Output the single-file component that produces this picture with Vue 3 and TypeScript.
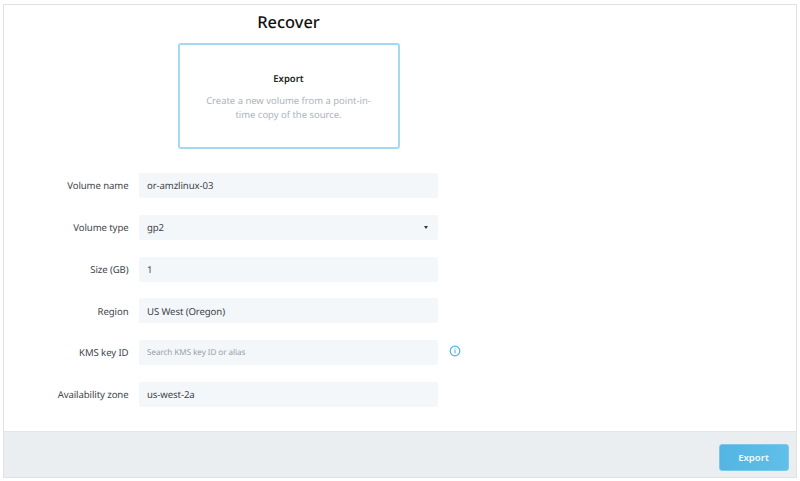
<script setup lang="ts">
interface Field { label: string; value: string; kind?: 'select' | 'placeholder' | 'info' }
const fields: Field[] = [
  { label: 'Volume name', value: 'or-amzlinux-03' },
  { label: 'Volume type', value: 'gp2', kind: 'select' },
  { label: 'Size (GB)', value: '1' },
  { label: 'Region', value: 'US West (Oregon)' },
  { label: 'KMS key ID', value: 'Search KMS key ID or alias', kind: 'info' },
  { label: 'Availability zone', value: 'us-west-2a' },
]
</script>

<template>
  <div class="page">
    <div class="frame">
      <main class="body">
        <h1 class="title">Recover</h1>
        <section class="card">
          <h2 class="card-title">Export</h2>
          <p class="card-text">Create a new volume from a point-in-time copy of the source.</p>
        </section>
        <form class="form">
          <div v-for="f in fields" :key="f.label" class="row">
            <span class="label">{{ f.label }}</span>
            <div class="field" :class="{ placeholder: f.kind === 'info' }">
              <span>{{ f.value }}</span>
              <span v-if="f.kind === 'select'" class="caret"></span>
            </div>
            <svg v-if="f.kind === 'info'" class="info" viewBox="0 0 12 12" width="12" height="12">
              <circle cx="6" cy="6" r="4.8" fill="none" stroke="#4fb3e3" stroke-width="1.2" />
              <rect x="5.45" y="5.2" width="1.1" height="3" fill="#4fb3e3" />
              <rect x="5.45" y="3.4" width="1.1" height="1.1" fill="#4fb3e3" />
            </svg>
          </div>
        </form>
      </main>
      <footer class="footer">
        <button class="btn" type="button">Export</button>
      </footer>
    </div>
  </div>
</template>

<style>
html, body { margin: 0; background: #fff; }
</style>

<style scoped>
.page {
  width: 800px;
  height: 481px;
  box-sizing: border-box;
  padding: 4px 3px 3px 3px;
  font-family: "Noto Sans", "Open Sans", sans-serif;
  text-rendering: geometricPrecision;
  overflow: hidden;
}
.frame {
  height: 100%;
  box-sizing: border-box;
  border: 1px solid #dfe1e3;
  display: flex;
  flex-direction: column;
}
.body {
  flex: 1;
  min-height: 0;
  width: 569px;
  display: flex;
  flex-direction: column;
  align-items: center;
}
.title {
  margin: 5px 0 0;
  font-size: 16.4px;
  line-height: 23px;
  font-weight: 500;
  color: #111;
}
.card {
  margin-top: 10px;
  width: 222px;
  height: 106px;
  box-sizing: border-box;
  border: 2px solid #a3d9f2;
  border-radius: 3px;
  padding: 27px 20px 0;
  text-align: center;
}
.card-title {
  margin: 0;
  font-size: 9.5px;
  line-height: 14px;
  font-weight: 600;
  color: #1c1f24;
}
.card-text {
  margin: 8px 0 0;
  font-size: 9.45px;
  line-height: 14px;
  color: #adb3bd;
}
.form {
  margin-top: 24px;
  display: flex;
  flex-direction: column;
  gap: 16.8px;
  align-self: flex-start;
}
.row {
  display: flex;
  align-items: center;
}
.label {
  width: 124.5px;
  margin-right: 10.5px;
  padding-top: 0.5px;
  text-align: right;
  font-size: 9.6px;
  letter-spacing: -0.1px;
  color: #3f444b;
}
.field {
  width: 299px;
  height: 25px;
  box-sizing: border-box;
  padding: 0.5px 8px 0;
  background: #f4f7fa;
  border-radius: 2px;
  display: flex;
  align-items: center;
  justify-content: space-between;
  font-size: 9.6px;
  letter-spacing: -0.1px;
  color: #3c4149;
}
.field.placeholder {
  font-size: 8.2px;
  color: #9aa0a8;
}
.caret {
  width: 0;
  height: 0;
  margin-right: 2.5px;
  border-left: 2.5px solid transparent;
  border-right: 2.5px solid transparent;
  border-top: 3px solid #333;
}
.info {
  margin-left: 11px;
  margin-top: -3px;
}
.footer {
  height: 46px;
  flex: none;
  box-sizing: border-box;
  background: #ebeef1;
  border-top: 1px solid #e3e6ea;
  display: flex;
  justify-content: flex-end;
  align-items: flex-start;
  padding: 11.5px 7.5px 0 0;
}
.btn {
  width: 70px;
  height: 27px;
  border: 1px solid #7cc7ea;
  border-radius: 3px;
  background: linear-gradient(90deg, #52b5e3, #61bfe9);
  color: #f2fafe;
  font-family: inherit;
  font-size: 9.6px;
  font-weight: 600;
  padding: 1px 0 0;
}
</style>
